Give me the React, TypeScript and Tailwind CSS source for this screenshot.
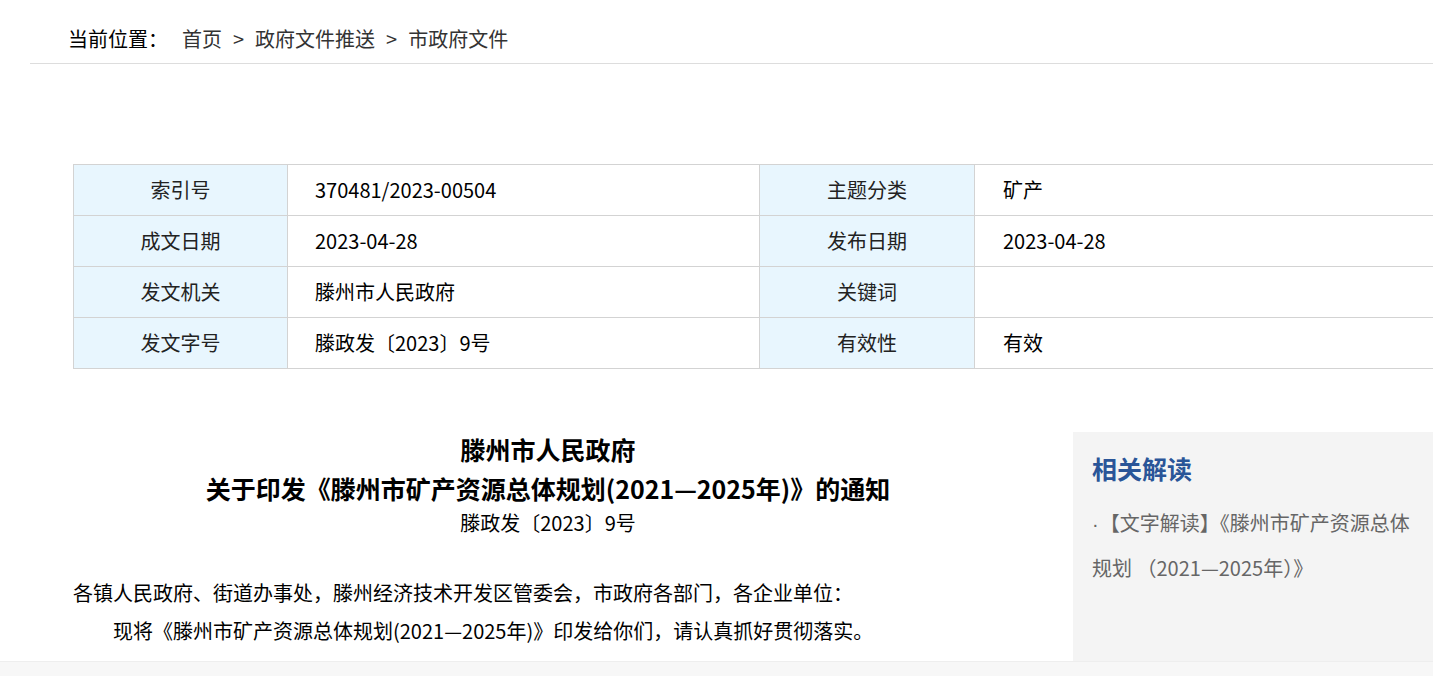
const font = { fontFamily: '"Microsoft YaHei", "Noto Sans CJK SC", "Noto Sans", sans-serif' };

const rows: [string, string, string, string][] = [
  ['索引号', '370481/2023-00504', '主题分类', '矿产'],
  ['成文日期', '2023-04-28', '发布日期', '2023-04-28'],
  ['发文机关', '滕州市人民政府', '关键词', ''],
  ['发文字号', '滕政发〔2023〕9号', '有效性', '有效'],
];

function InfoTable() {
  return (
    <div className="ml-[73px] mt-[100px] w-[1420px] grid grid-cols-[214px_472px_215px_1fr] border-l border-t border-[#d3d3d3] text-[20px] text-black">
      {rows.map((r) => (
        <div key={r[0]} className="contents">
          <div className="h-[51px] flex items-center justify-center bg-[#e8f6fe] border-r border-b border-[#d3d3d3] text-[#222]">{r[0]}</div>
          <div className="h-[51px] flex items-center pl-[27px] border-r border-b border-[#d3d3d3]">{r[1]}</div>
          <div className="h-[51px] flex items-center justify-center bg-[#e8f6fe] border-r border-b border-[#d3d3d3] text-[#222]">{r[2]}</div>
          <div className="h-[51px] flex items-center pl-[28px] border-r border-b border-[#d3d3d3]">{r[3]}</div>
        </div>
      ))}
    </div>
  );
}

export default function App() {
  return (
    <div className="w-full h-[676px] overflow-hidden bg-white" style={font}>
      <div className="ml-[30px] h-[64px] border-b border-[#dddddd] pt-[24px] pl-[38px] flex text-[20px] leading-[30px]">
        <span className="text-black">当前位置：</span>
        <span className="ml-[14px] text-[#333]">首页</span>
        <span className="px-[11px] text-[#333]">&gt;</span>
        <span className="text-[#333]">政府文件推送</span>
        <span className="px-[11px] text-[#333]">&gt;</span>
        <span className="text-[#333]">市政府文件</span>
      </div>

      <InfoTable />

      <div className="mt-[63px] h-[229px] flex overflow-hidden">
        <div className="ml-[73px] w-[950px] shrink-0 text-black">
          <div className="text-center font-bold text-[25px] leading-[34px]">滕州市人民政府</div>
          <div className="text-center font-bold text-[25px] leading-[44px]">关于印发《滕州市矿产资源总体规划(2021—2025年)》的通知</div>
          <div className="text-center text-[20px] leading-[26px]">滕政发〔2023〕9号</div>
          <p className="mt-[38px] text-[20px] leading-[38px]">各镇人民政府、街道办事处，滕州经济技术开发区管委会，市政府各部门，各企业单位：</p>
          <p className="pl-[40px] text-[20px] leading-[38px]">现将《滕州市矿产资源总体规划(2021—2025年)》印发给你们，请认真抓好贯彻落实。</p>
        </div>
        <div className="ml-[50px] w-[380px] shrink-0 bg-[#f4f4f4] pt-[18px] pl-[19px]">
          <h3 className="text-[25px] leading-[36px] font-bold text-[#2a5598]">相关解读</h3>
          <a className="block mt-[15px] text-[20px] leading-[43px] text-[#666] whitespace-nowrap">
            <span className="font-['Liberation_Sans',sans-serif] pr-[11px]">·</span>【文字解读】《滕州市矿产资源总体
            <br />
            规划 （2021—2025年）》
          </a>
        </div>
      </div>
      <div className="h-[20px] bg-[#f7f7f7] border-t border-[#eeeeee]" />
    </div>
  );
}
